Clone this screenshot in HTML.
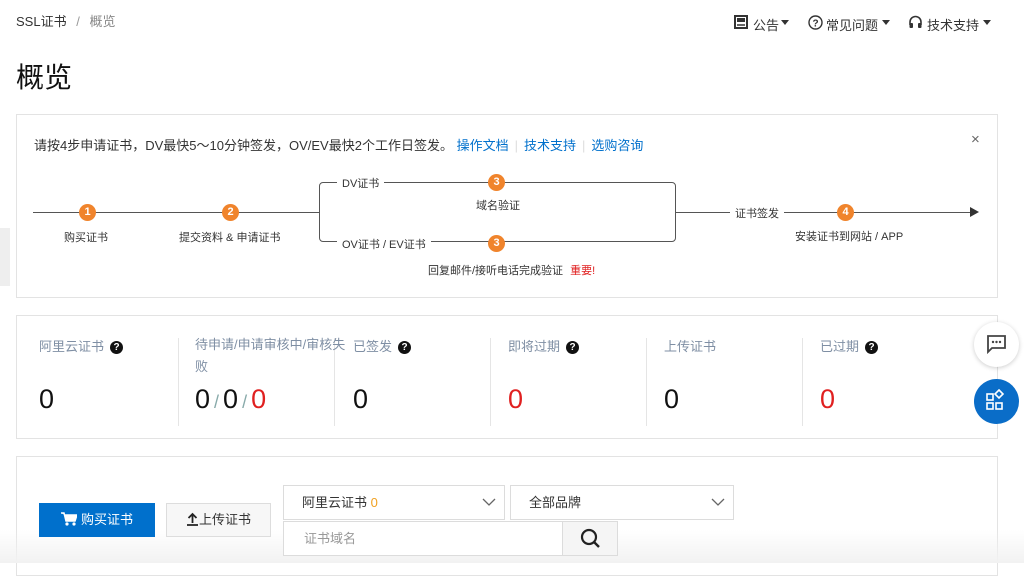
<!DOCTYPE html>
<html><head><meta charset="utf-8"><style>
*{box-sizing:border-box;margin:0;padding:0}
body{width:1024px;height:563px;overflow:hidden;background:#fff;font-family:"Liberation Sans","Noto Sans CJK SC",sans-serif;color:#333;position:relative}
.a{position:absolute;white-space:nowrap}
.box{position:absolute;border:1px solid #e3e3e3;background:#fff}
.c{position:absolute;width:17px;height:17px;border-radius:50%;background:#f0842c;color:#fff;font-size:11px;font-weight:bold;text-align:center;line-height:17px}
.ln{position:absolute;height:1px;background:#555}
.sm{font-size:11px;color:#333}
.lab{font-size:13px;color:#7f8fa4}
.num{font-size:27px;color:#111}
.q{display:inline-block;width:13px;height:13px;border-radius:50%;background:#111;color:#fff;font-size:10px;font-weight:bold;text-align:center;line-height:13px;vertical-align:1px;margin-left:6px}
.sep{position:absolute;top:22px;width:1px;height:88px;background:#e5e5e5}
.sel{position:absolute;border:1px solid #dcdcdc;background:#fff;font-size:13px;color:#333}
.sl{color:#8aa;font-size:18px;margin:0 4px}
</style></head><body>
<div class="a" style="left:16px;top:11px;font-size:13px;color:#333">SSL证书 <span style="color:#999;margin:0 6px">/</span> <span style="color:#888">概览</span></div>
<svg class="a" style="left:734px;top:15px" width="14" height="14"><rect x="1" y="1" width="12" height="12" fill="none" stroke="#333" stroke-width="2"/><rect x="3" y="3" width="8" height="4" fill="#333"/><line x1="3" y1="10" x2="11" y2="10" stroke="#333" stroke-width="1.5"/></svg>
<div class="a" style="left:753px;top:15px;font-size:13px">公告</div>
<div class="a" style="left:781px;top:20px;border-top:5px solid #333;border-left:4px solid transparent;border-right:4px solid transparent"></div>
<svg class="a" style="left:808px;top:15px" width="15" height="15"><circle cx="7.5" cy="7.5" r="6.5" fill="none" stroke="#333" stroke-width="1.4"/><text x="7.5" y="11.5" font-size="10" font-weight="bold" text-anchor="middle" fill="#333" font-family="Liberation Sans">?</text></svg>
<div class="a" style="left:826px;top:15px;font-size:13px">常见问题</div>
<div class="a" style="left:882px;top:20px;border-top:5px solid #333;border-left:4px solid transparent;border-right:4px solid transparent"></div>
<svg class="a" style="left:908px;top:15px" width="15" height="15"><path d="M2 10V7a5.5 5.5 0 0 1 11 0v3" fill="none" stroke="#333" stroke-width="1.6"/><rect x="1.5" y="8" width="3.5" height="5" rx="1" fill="#333"/><rect x="10" y="8" width="3.5" height="5" rx="1" fill="#333"/></svg>
<div class="a" style="left:927px;top:15px;font-size:13px">技术支持</div>
<div class="a" style="left:983px;top:20px;border-top:5px solid #333;border-left:4px solid transparent;border-right:4px solid transparent"></div>
<div class="a" style="left:16px;top:56px;font-size:28px;color:#111">概览</div>

<div class="box" style="left:16px;top:114px;width:982px;height:184px">
<div class="a" style="left:17px;top:20px;font-size:13px;color:#333">请按4步申请证书，DV最快5～10分钟签发，OV/EV最快2个工作日签发。 <span style="color:#0070cc">操作文档</span><span style="color:#ddd;margin:0 6px">|</span><span style="color:#0070cc">技术支持</span><span style="color:#ddd;margin:0 6px">|</span><span style="color:#0070cc">选购咨询</span></div>
<div class="a" style="left:954px;top:16px;font-size:15px;color:#666">×</div>
</div>
<div class="ln" style="left:33px;top:212px;width:286px"></div>
<div class="c" style="left:79px;top:204px">1</div>
<div class="c" style="left:222px;top:204px">2</div>
<div class="a sm" style="left:64px;top:229px">购买证书</div>
<div class="a sm" style="left:179px;top:229px">提交资料 &amp; 申请证书</div>
<div style="position:absolute;left:319px;top:182px;width:357px;height:60px;border:1px solid #555;border-radius:4px"></div>
<div class="a sm" style="left:337px;top:175px;background:#fff;padding:0 5px">DV证书</div>
<div class="a sm" style="left:337px;top:236px;background:#fff;padding:0 5px">OV证书 / EV证书</div>
<div class="c" style="left:488px;top:174px">3</div>
<div class="c" style="left:488px;top:235px">3</div>
<div class="a sm" style="left:476px;top:197px">域名验证</div>
<div class="a sm" style="left:428px;top:262px">回复邮件/接听电话完成验证 <span style="color:#e02020;margin-left:4px">重要!</span></div>
<div class="ln" style="left:676px;top:212px;width:296px"></div>
<div style="position:absolute;left:970px;top:207px;border-left:9px solid #333;border-top:5px solid transparent;border-bottom:5px solid transparent"></div>
<div class="a sm" style="left:730px;top:205px;background:#fff;padding:0 5px">证书签发</div>
<div class="c" style="left:837px;top:204px">4</div>
<div class="a sm" style="left:795px;top:228px">安装证书到网站 / APP</div>
<div style="position:absolute;left:0;top:228px;width:10px;height:58px;background:#eee"></div>

<div class="box" style="left:16px;top:315px;width:982px;height:124px">
<div class="a lab" style="left:22px;top:20px">阿里云证书<span class="q">?</span></div>
<div class="a num" style="left:22px;top:68px">0</div>
<div class="sep" style="left:161px"></div>
<div class="sep" style="left:317px"></div>
<div class="a lab" style="left:178px;top:18px;white-space:normal;width:158px;line-height:22px">待申请/申请审核中/审核失败</div>
<div class="a num" style="left:178px;top:68px">0<span class="sl">/</span>0<span class="sl">/</span><span style="color:#e02020">0</span></div>
<div class="a lab" style="left:336px;top:20px">已签发<span class="q">?</span></div>
<div class="a num" style="left:336px;top:68px">0</div>
<div class="sep" style="left:473px"></div>
<div class="a lab" style="left:491px;top:20px">即将过期<span class="q">?</span></div>
<div class="a num" style="left:491px;top:68px;color:#e02020">0</div>
<div class="sep" style="left:629px"></div>
<div class="a lab" style="left:647px;top:20px">上传证书</div>
<div class="a num" style="left:647px;top:68px">0</div>
<div class="sep" style="left:785px"></div>
<div class="a lab" style="left:803px;top:20px">已过期<span class="q">?</span></div>
<div class="a num" style="left:803px;top:68px;color:#e02020">0</div>
</div>

<div class="box" style="left:16px;top:456px;width:982px;height:120px"></div>
<div style="position:absolute;left:0;top:530px;width:1024px;height:33px;background:linear-gradient(#fff0,#f2f2f2)"></div>
<div class="a" style="left:39px;top:503px;width:116px;height:34px;background:#0070cc;color:#fff;font-size:13px;line-height:34px;text-align:center"><svg width="16" height="14" style="vertical-align:-2px;margin-right:4px"><path d="M0 1h3l2 8h9l2-6H4" fill="#fff" stroke="#fff" stroke-width="1.5"/><circle cx="6" cy="12" r="1.6" fill="#fff"/><circle cx="13" cy="12" r="1.6" fill="#fff"/></svg>购买证书</div>
<div class="a" style="left:166px;top:503px;width:105px;height:34px;border:1px solid #ddd;background:#f7f7f7;font-size:13px;line-height:32px;text-align:center"><svg width="13" height="14" style="vertical-align:-2px"><path d="M6.5 11V2M2.5 6l4-4 4 4M1 13h11" fill="none" stroke="#222" stroke-width="1.8"/></svg>上传证书</div>
<div class="sel" style="left:283px;top:485px;width:222px;height:35px;line-height:33px;padding-left:18px">阿里云证书 <span style="color:#f0a020">0</span><svg style="position:absolute;right:8px;top:11px" width="14" height="10"><path d="M1 2l6 6 6-6" fill="none" stroke="#666" stroke-width="1.3"/></svg></div>
<div class="sel" style="left:510px;top:485px;width:224px;height:35px;line-height:33px;padding-left:18px">全部品牌<svg style="position:absolute;right:8px;top:11px" width="14" height="10"><path d="M1 2l6 6 6-6" fill="none" stroke="#666" stroke-width="1.3"/></svg></div>
<div class="sel" style="left:283px;top:521px;width:280px;height:35px;line-height:33px;padding-left:20px;color:#999">证书域名</div>
<div class="sel" style="left:562px;top:521px;width:56px;height:35px;background:#f5f5f5"><svg width="56" height="33"><circle cx="26" cy="15" r="7" fill="none" stroke="#222" stroke-width="2.2"/><line x1="31" y1="20" x2="36" y2="25" stroke="#222" stroke-width="2.4"/></svg></div>

<div style="position:absolute;left:974px;top:322px;width:45px;height:45px;border-radius:50%;background:#fff;box-shadow:0 1px 5px rgba(0,0,0,.2)"><svg width="45" height="45"><path d="M14 14h17v12H18l-4 4z" fill="none" stroke="#444" stroke-width="1.8"/><circle cx="19" cy="20" r="1.2" fill="#444"/><circle cx="22.5" cy="20" r="1.2" fill="#444"/><circle cx="26" cy="20" r="1.2" fill="#444"/></svg></div>
<div style="position:absolute;left:974px;top:379px;width:45px;height:45px;border-radius:50%;background:#0a6dc8"><svg width="45" height="45" fill="none" stroke="#fff" stroke-width="1.6"><rect x="13" y="15" width="6" height="6"/><rect x="13" y="24" width="6" height="6"/><rect x="22" y="24" width="6" height="6"/><path d="M25 11l4 4-4 4-4-4z"/></svg></div>
</body></html>
